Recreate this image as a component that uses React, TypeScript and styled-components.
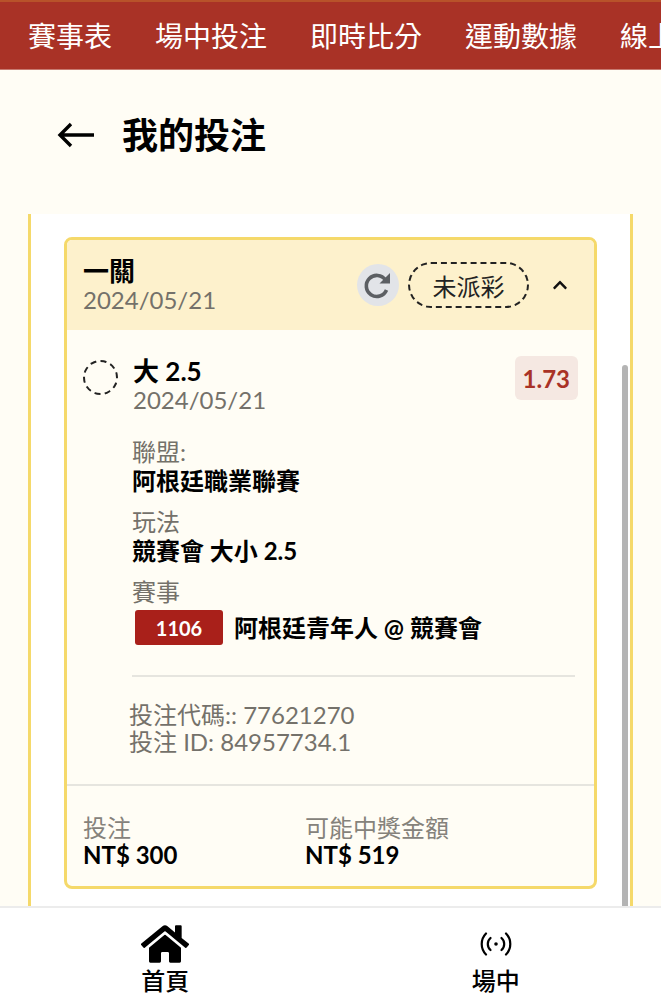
import React from 'react'
import styled, { createGlobalStyle } from 'styled-components'
import { FaHome } from 'react-icons/fa'
import { FaChevronUp } from 'react-icons/fa'

const GlobalStyle = createGlobalStyle`
  html, body {
    margin: 0;
    padding: 0;
    background: #fffdf5;
  }
  * {
    box-sizing: border-box;
  }
`

const Page = styled.div`
  height: 1000px;
  display: flex;
  flex-direction: column;
  overflow: hidden;
  font-family: Lato, 'Noto Sans CJK TC', sans-serif;
  background: #fffdf5;
  color: #000;
`

const Nav = styled.nav`
  height: 70px;
  flex: none;
  display: flex;
  gap: 43px;
  align-items: center;
  padding: 0 0 0 28px;
  overflow: hidden;
  white-space: nowrap;
  background: #a93226;
  border-top: 2px solid #b8522a;
  border-bottom: 1px solid #c77a70;
`

const NavItem = styled.span`
  color: #fff;
  font-size: 28px;
  line-height: 36px;
  flex: none;
`

const TitleRow = styled.div`
  flex: none;
  height: 144px;
  display: flex;
  align-items: center;
  gap: 28px;
  padding: 0 0 14px 57px;
`

const Title = styled.h1`
  margin: 0;
  font-size: 36px;
  font-weight: 700;
  line-height: 44px;
`

const Panel = styled.div`
  flex: 1;
  min-height: 0;
  position: relative;
  margin: 0 28px;
  padding: 23px 33px 0 33px;
  background: #fff;
  border-left: 3px solid #f5d96a;
  border-right: 3px solid #f5d96a;
  overflow: hidden;
`

const ScrollThumb = styled.div`
  position: absolute;
  right: 2px;
  top: 151px;
  bottom: 0;
  width: 6px;
  border-radius: 3px 3px 0 0;
  background: #b4b4b4;
`

const Card = styled.section`
  border: 3px solid #f5d96a;
  border-radius: 8px;
  overflow: hidden;
  background: #fffdf5;
`

const CardHead = styled.header`
  height: 90px;
  display: flex;
  align-items: center;
  padding: 0 26px 0 16px;
  background: #fdf1cc;
`

const HeadText = styled.div`
  flex: 1;
`

const HeadTitle = styled.div`
  font-size: 26px;
  font-weight: 700;
  line-height: 30px;
`

const DateText = styled.div`
  font-size: 24px;
  line-height: 28px;
  color: #74716a;
`

const RefreshButton = styled.div`
  width: 42px;
  height: 42px;
  border-radius: 50%;
  display: flex;
  align-items: center;
  justify-content: center;
  background: #e2e4e8;
  margin-right: 9px;
`

const StatusPill = styled.div`
  width: 121px;
  height: 46px;
  border: 2px dashed #222;
  border-radius: 23px;
  display: flex;
  align-items: center;
  justify-content: center;
  font-size: 24px;
  color: #222;
  margin-right: 23px;
`

const Selection = styled.div`
  padding: 26px 16px 0;
  display: flex;
  align-items: flex-start;
`

const DashedCircle = styled.div`
  width: 35px;
  height: 35px;
  border: 2px dashed #222;
  border-radius: 50%;
  margin: 4px 15px 0 0;
  flex: none;
`

const SelectionText = styled.div`
  flex: 1;
`

const SelectionName = styled.div`
  font-size: 26px;
  font-weight: 700;
  line-height: 30px;
`

const Odds = styled.div`
  height: 44px;
  padding: 0 8px;
  border-radius: 6px;
  display: flex;
  align-items: center;
  font-size: 24px;
  font-weight: 700;
  color: #a93226;
  background: #f5e8e2;
  margin-right: 0;
`

const Details = styled.div`
  padding: 0 19px 0 65px;
`

const Label = styled.div`
  font-size: 24px;
  line-height: 28px;
  color: #74716a;
  margin-top: ${(p: { $top: number }) => p.$top}px;
`

const Value = styled.div`
  font-size: 24px;
  font-weight: 700;
  line-height: 30px;
`

const MatchRow = styled.div`
  display: flex;
  align-items: center;
  gap: 11px;
  margin: 4px 0 0 3px;
`

const MatchCode = styled.span`
  width: 88px;
  height: 35px;
  border-radius: 3px;
  display: flex;
  align-items: center;
  justify-content: center;
  font-size: 20px;
  font-weight: 700;
  color: #fff;
  background: #a9201a;
`

const Rule = styled.hr`
  margin: 30px 0 0;
  border: 0;
  border-top: 2px solid #e6e5df;
`

const Codes = styled.div`
  margin: 24px 0 0 -3px;
  font-size: 24px;
  line-height: 27px;
  color: #74716a;
`

const Totals = styled.div`
  margin-top: 29px;
  height: 102px;
  border-top: 2px solid #e6e5df;
  padding: 28px 16px 0;
  display: flex;
`

const Total = styled.div`
  width: 222px;
`

const TotalLabel = styled.div`
  font-size: 24px;
  line-height: 28px;
  color: #85827b;
`

const TotalValue = styled.div`
  font-size: 24px;
  font-weight: 700;
  line-height: 26px;
`

const Footer = styled.footer`
  flex: none;
  height: 94px;
  display: flex;
  background: #fff;
  border-top: 2px solid #ececec;
`

const Tab = styled.div`
  flex: 1;
  display: flex;
  flex-direction: column;
  align-items: center;
  padding-top: 14px;
`

const TabIcon = styled.div`
  height: 44px;
  display: flex;
  align-items: center;
  justify-content: center;
`

const TabLabel = styled.div`
  font-size: 24px;
  font-weight: 500;
  line-height: 30px;
`

const navItems = ['賽事表', '場中投注', '即時比分', '運動數據', '線上客服']

const App: React.FC = () => {
  return (
    <Page>
      <GlobalStyle />
      <Nav>
        {navItems.map((item) => (
          <NavItem key={item}>{item}</NavItem>
        ))}
      </Nav>
      <TitleRow>
        <svg width="37" height="26" viewBox="0 0 37 26" fill="none" stroke="#000" strokeWidth="3.4">
          <path d="M37 13H3M14 2L3 13l11 11" />
        </svg>
        <Title>我的投注</Title>
      </TitleRow>
      <Panel>
        <Card>
          <CardHead>
            <HeadText>
              <HeadTitle>一關</HeadTitle>
              <DateText>2024/05/21</DateText>
            </HeadText>
            <RefreshButton>
              <svg width="30" height="30" viewBox="0 0 30 30" fill="none">
                <path d="M23.5 20a10.5 10.5 0 1 1-1-10" stroke="#5c5f63" strokeWidth="3.6" />
                <path d="M27 3v10.5H16.5z" fill="#5c5f63" />
              </svg>
            </RefreshButton>
            <StatusPill>未派彩</StatusPill>
            <FaChevronUp size={16} color="#111" />
          </CardHead>
          <Selection>
            <DashedCircle />
            <SelectionText>
              <SelectionName>大 2.5</SelectionName>
              <DateText>2024/05/21</DateText>
            </SelectionText>
            <Odds>1.73</Odds>
          </Selection>
          <Details>
            <Label $top={24}>聯盟:</Label>
            <Value>阿根廷職業聯賽</Value>
            <Label $top={12}>玩法</Label>
            <Value>競賽會 大小 2.5</Value>
            <Label $top={12}>賽事</Label>
            <MatchRow>
              <MatchCode>1106</MatchCode>
              <Value>阿根廷青年人 @ 競賽會</Value>
            </MatchRow>
            <Rule />
            <Codes>
              <div>投注代碼:: 77621270</div>
              <div>投注 ID: 84957734.1</div>
            </Codes>
          </Details>
          <Totals>
            <Total>
              <TotalLabel>投注</TotalLabel>
              <TotalValue>NT$ 300</TotalValue>
            </Total>
            <Total>
              <TotalLabel>可能中獎金額</TotalLabel>
              <TotalValue>NT$ 519</TotalValue>
            </Total>
          </Totals>
        </Card>
        <ScrollThumb />
      </Panel>
      <Footer>
        <Tab>
          <TabIcon>
            <FaHome size={48} />
          </TabIcon>
          <TabLabel>首頁</TabLabel>
        </Tab>
        <Tab>
          <TabIcon>
            <svg width="32" height="32" viewBox="0 0 32 32" fill="none" stroke="#000" strokeWidth="2.2" strokeLinecap="round">
              <circle cx="16" cy="16" r="1.8" fill="#000" stroke="none" />
              <path d="M10.5 10a8 8 0 0 0 0 12M21.5 10a8 8 0 0 1 0 12M6 5.5a15 15 0 0 0 0 21M26 5.5a15 15 0 0 1 0 21" />
            </svg>
          </TabIcon>
          <TabLabel>場中</TabLabel>
        </Tab>
      </Footer>
    </Page>
  )
}

export default App
